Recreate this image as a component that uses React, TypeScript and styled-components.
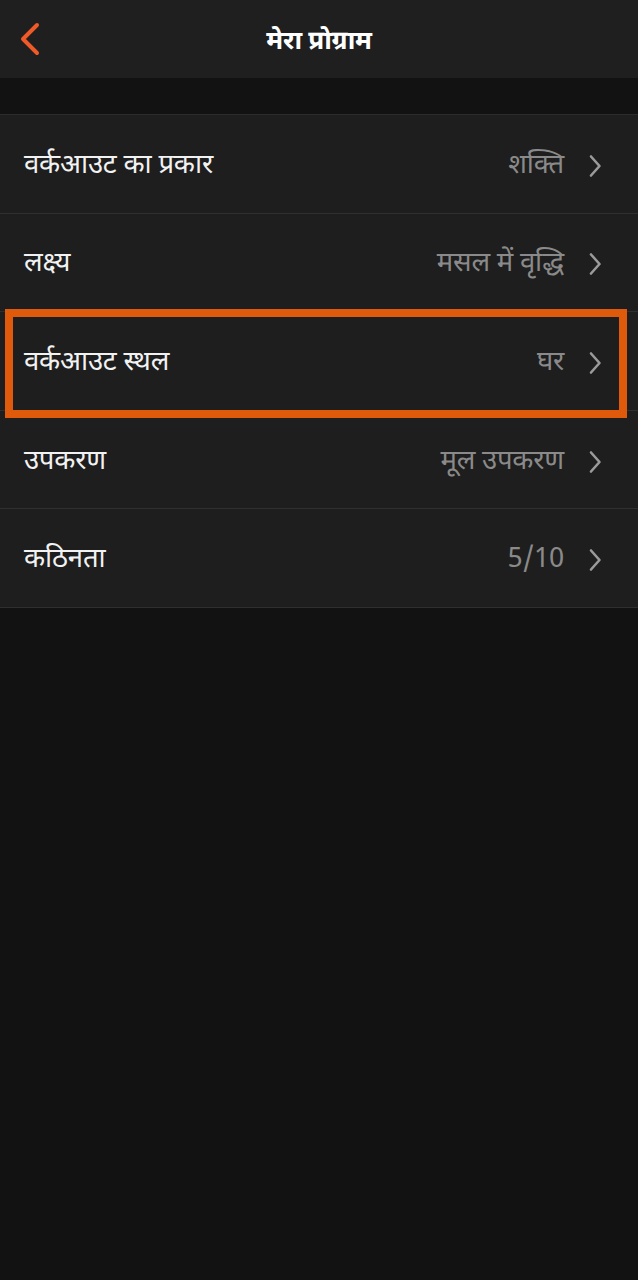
import styled, { createGlobalStyle } from 'styled-components';

const GlobalStyle = createGlobalStyle`
  html, body {
    margin: 0;
    padding: 0;
    background: #121212;
  }
  body {
    font-family: 'Noto Sans Devanagari', 'Noto Sans', 'Liberation Sans', sans-serif;
  }
`;

const Page = styled.div`
  width: 638px;
  min-height: 1280px;
  background: #121212;
`;

const Header = styled.header`
  height: 78px;
  background: #1f1f1f;
  display: grid;
  grid-template-columns: 78px 1fr 78px;
  align-items: center;
`;

const BackButton = styled.button`
  background: none;
  border: none;
  padding: 0 0 0 18px;
  display: flex;
  align-items: center;
  height: 100%;
`;

const Title = styled.h1`
  margin: 0;
  padding-top: 8px;
  text-align: center;
  color: #ffffff;
  font-size: 26px;
  font-weight: 700;
  letter-spacing: -0.3px;
`;

const Spacer = styled.div`
  height: 36px;
`;

const List = styled.ul`
  list-style: none;
  margin: 0;
  padding: 0;
  background: #1e1e1e;
  border-top: 1px solid #2c2c2c;
`;

const Row = styled.li`
  position: relative;
  box-sizing: border-box;
  height: 98.6px;
  display: flex;
  align-items: center;
  padding: 4px 36px 0 24px;
  border-bottom: 1px solid #2f2f2f;
`;

const Label = styled.span`
  flex: 1;
  color: #f2f2f2;
  font-size: 27.5px;
  letter-spacing: -0.2px;
`;

const Value = styled.span`
  color: #8a8a8a;
  font-size: 27.5px;
  letter-spacing: -0.2px;
  margin-right: 24px;
`;

const Highlight = styled.div`
  position: absolute;
  left: 5px;
  right: 11px;
  top: -3px;
  bottom: -8px;
  border: 8.5px solid #e05a0c;
  pointer-events: none;
`;

const Chevron = () => (
  <svg width="14" height="24" viewBox="0 0 14 24" fill="none">
    <path d="M3 2.5l8.5 9.5-8.5 9.5" stroke="#9a9a9a" strokeWidth="2.6" strokeLinecap="round" strokeLinejoin="round" />
  </svg>
);

const BackIcon = () => (
  <svg width="24" height="34" viewBox="0 0 24 34" fill="none">
    <path d="M19 3L5 17l14 14" stroke="#f05a28" strokeWidth="4" strokeLinecap="round" strokeLinejoin="round" />
  </svg>
);

const rows = [
  { label: 'वर्कआउट का प्रकार', value: 'शक्ति' },
  { label: 'लक्ष्य', value: 'मसल में वृद्धि' },
  { label: 'वर्कआउट स्थल', value: 'घर', highlighted: true },
  { label: 'उपकरण', value: 'मूल उपकरण' },
  { label: 'कठिनता', value: '5/10' },
];

const App = () => {
  return (
    <Page>
      <GlobalStyle />
      <Header>
        <BackButton aria-label="back">
          <BackIcon />
        </BackButton>
        <Title>मेरा प्रोग्राम</Title>
        <div />
      </Header>
      <Spacer />
      <List>
        {rows.map((row, index) => (
          <Row key={index}>
            <Label>{row.label}</Label>
            <Value>{row.value}</Value>
            <Chevron />
            {row.highlighted && <Highlight />}
          </Row>
        ))}
      </List>
    </Page>
  );
};

export default App;
